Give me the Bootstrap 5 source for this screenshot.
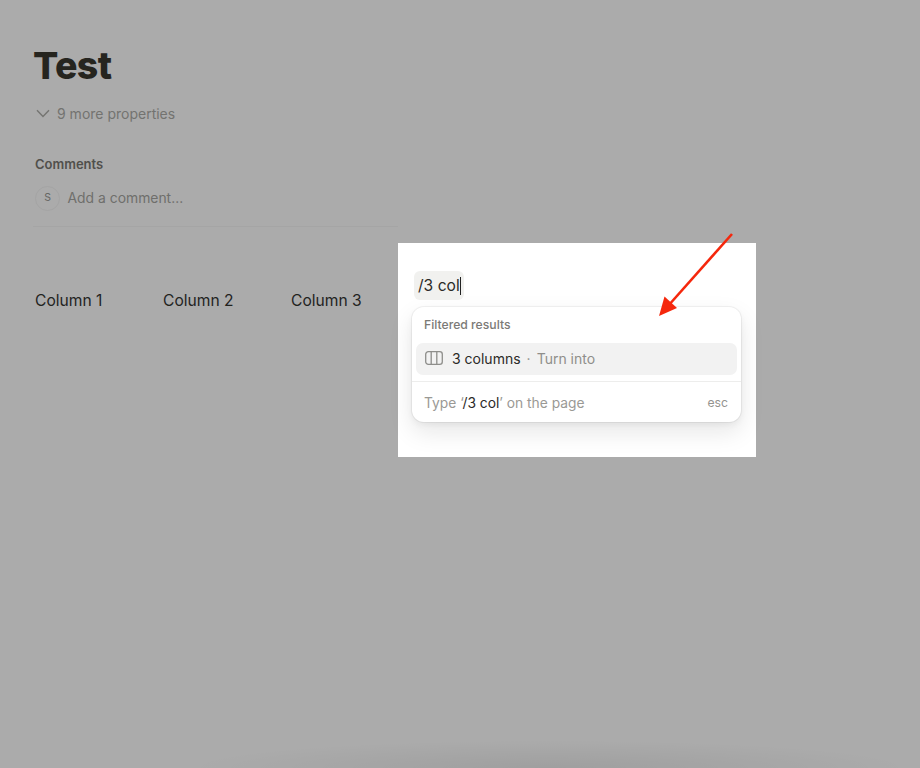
<!DOCTYPE html>
<html lang="en">
<head>
<meta charset="utf-8">
<title>Test</title>
<link href="https://cdn.jsdelivr.net/npm/bootstrap@5.3.0/dist/css/bootstrap.min.css" rel="stylesheet">
<style>
html,body{height:100%}
body{background:#ababab;font-family:Inter,"Liberation Sans",sans-serif;color:#262521;overflow:hidden;-webkit-font-smoothing:antialiased}
.pg-root{position:relative;width:920px;height:768px;padding:41px 0 0 33px}
.pg-title{font-size:37.5px;line-height:50px;font-weight:800;color:#26251f;margin:0 0 10px;letter-spacing:-.55px}
.pg-props{height:24px;color:#737370;font-size:14px;gap:7px;margin-bottom:29px;padding-left:3px}
.pg-label{font-size:13px;line-height:20px;font-weight:600;color:#51504c;padding-left:2px;margin-bottom:11px}
.pg-comment{gap:7.5px;color:#6f6f6c;font-size:13.9px;padding-left:2px;height:26px}
.pg-avatar{width:25px;height:25px;border:1px solid #a4a4a4;border-radius:50%;font-size:10.5px;color:#666663;flex:none}
.pg-rule{height:1px;width:365px;background:#a5a5a5;margin-top:15px}
.pg-cols{display:grid;grid-template-columns:128px 128px 128px;margin-top:62px;padding-left:2px;font-size:15.6px;line-height:24px;color:#23231f}
.pg-shot{position:absolute;left:398px;top:243px;width:358px;height:214px;background:#fff;padding:28px 15px 0 13.5px}
.pg-slash{display:inline-flex;align-items:center;height:29px;width:50px;background:#f1f1ef;border-radius:6px;padding-left:4px;margin-left:2.5px;font-size:15.6px;color:#2b2a27;line-height:1;white-space:nowrap}
.pg-caret{display:inline-block;width:1px;height:18px;background:#222}
.pg-menu{margin-top:7px;height:115px;background:#fff;border-radius:12px;box-shadow:0 0 0 1px rgba(15,15,15,.05),0 10px 24px rgba(15,15,15,.1),0 3px 6px rgba(15,15,15,.05);padding-top:10px}
.pg-head{font-size:12.2px;line-height:16px;font-weight:500;color:#7b7a76;padding-left:12.5px;margin-bottom:10px}
.pg-item{margin:0 4.5px;height:32px;background:#f2f2f2;border-radius:7px;padding:0 0 2px 9px;font-size:14px;color:#2b2a27;gap:9px}
.pg-muted{color:#8f8e8a}
.pg-dot{margin:0 6px}
.pg-sep{height:1px;background:#ededec;margin-top:6px}
.pg-foot{height:41px;padding:2px 13px 0 12.5px;font-size:13.8px;color:#9a9995}
.pg-foot b{font-weight:400;color:#2b2a27}
.pg-esc{font-size:12.2px;color:#94938f}
.pg-arrow{position:absolute;left:650px;top:228px;width:90px;height:92px}
.pg-glow{position:absolute;left:200px;right:20px;bottom:0;height:28px;background:radial-gradient(ellipse 52% 100% at 50% 100%,rgba(0,0,0,.07),rgba(0,0,0,0))}
</style>
</head>
<body>
<div class="pg-root">
  <h1 class="pg-title">Test</h1>
  <div class="pg-props d-flex align-items-center">
    <svg width="14" height="9" viewBox="0 0 14 9" fill="none" stroke="#747471" stroke-width="1.4"><path d="M1 1.2 7 7.5 13 1.2"/></svg>
    <span>9 more properties</span>
  </div>
  <div class="pg-label">Comments</div>
  <div class="pg-comment d-flex align-items-center">
    <span class="pg-avatar d-flex align-items-center justify-content-center">S</span>
    <span>Add a comment...</span>
  </div>
  <div class="pg-rule"></div>
  <div class="pg-cols"><span>Column 1</span><span>Column 2</span><span>Column 3</span></div>

  <div class="pg-shot">
    <div class="pg-slash">/3 col<span class="pg-caret"></span></div>
    <div class="pg-menu">
      <div class="pg-head">Filtered results</div>
      <div class="pg-item d-flex align-items-center">
        <svg width="18" height="14" viewBox="0 0 18 14" fill="none" stroke="#8e8e8b" stroke-width="1.3"><rect x=".7" y=".7" width="16.6" height="12.6" rx="2.6"/><path d="M6.2.7v12.6M11.8.7v12.6"/></svg>
        <span>3 columns<span class="pg-muted"><span class="pg-dot">·</span>Turn into</span></span>
      </div>
      <div class="pg-sep"></div>
      <div class="pg-foot d-flex align-items-center justify-content-between">
        <span>Type ‘<b>/3 col</b>’ on the page</span>
        <span class="pg-esc">esc</span>
      </div>
    </div>
  </div>

  <svg class="pg-arrow" viewBox="0 0 90 92"><path d="M82 6 18 78" stroke="#f5270c" stroke-width="2.6" fill="none"/><path d="M9 88 14.5 68.5 27 80Z" fill="#f5270c"/></svg>
  <div class="pg-glow"></div>
</div>
<script src="https://cdn.jsdelivr.net/npm/bootstrap@5.3.0/dist/js/bootstrap.bundle.min.js"></script>
</body>
</html>
